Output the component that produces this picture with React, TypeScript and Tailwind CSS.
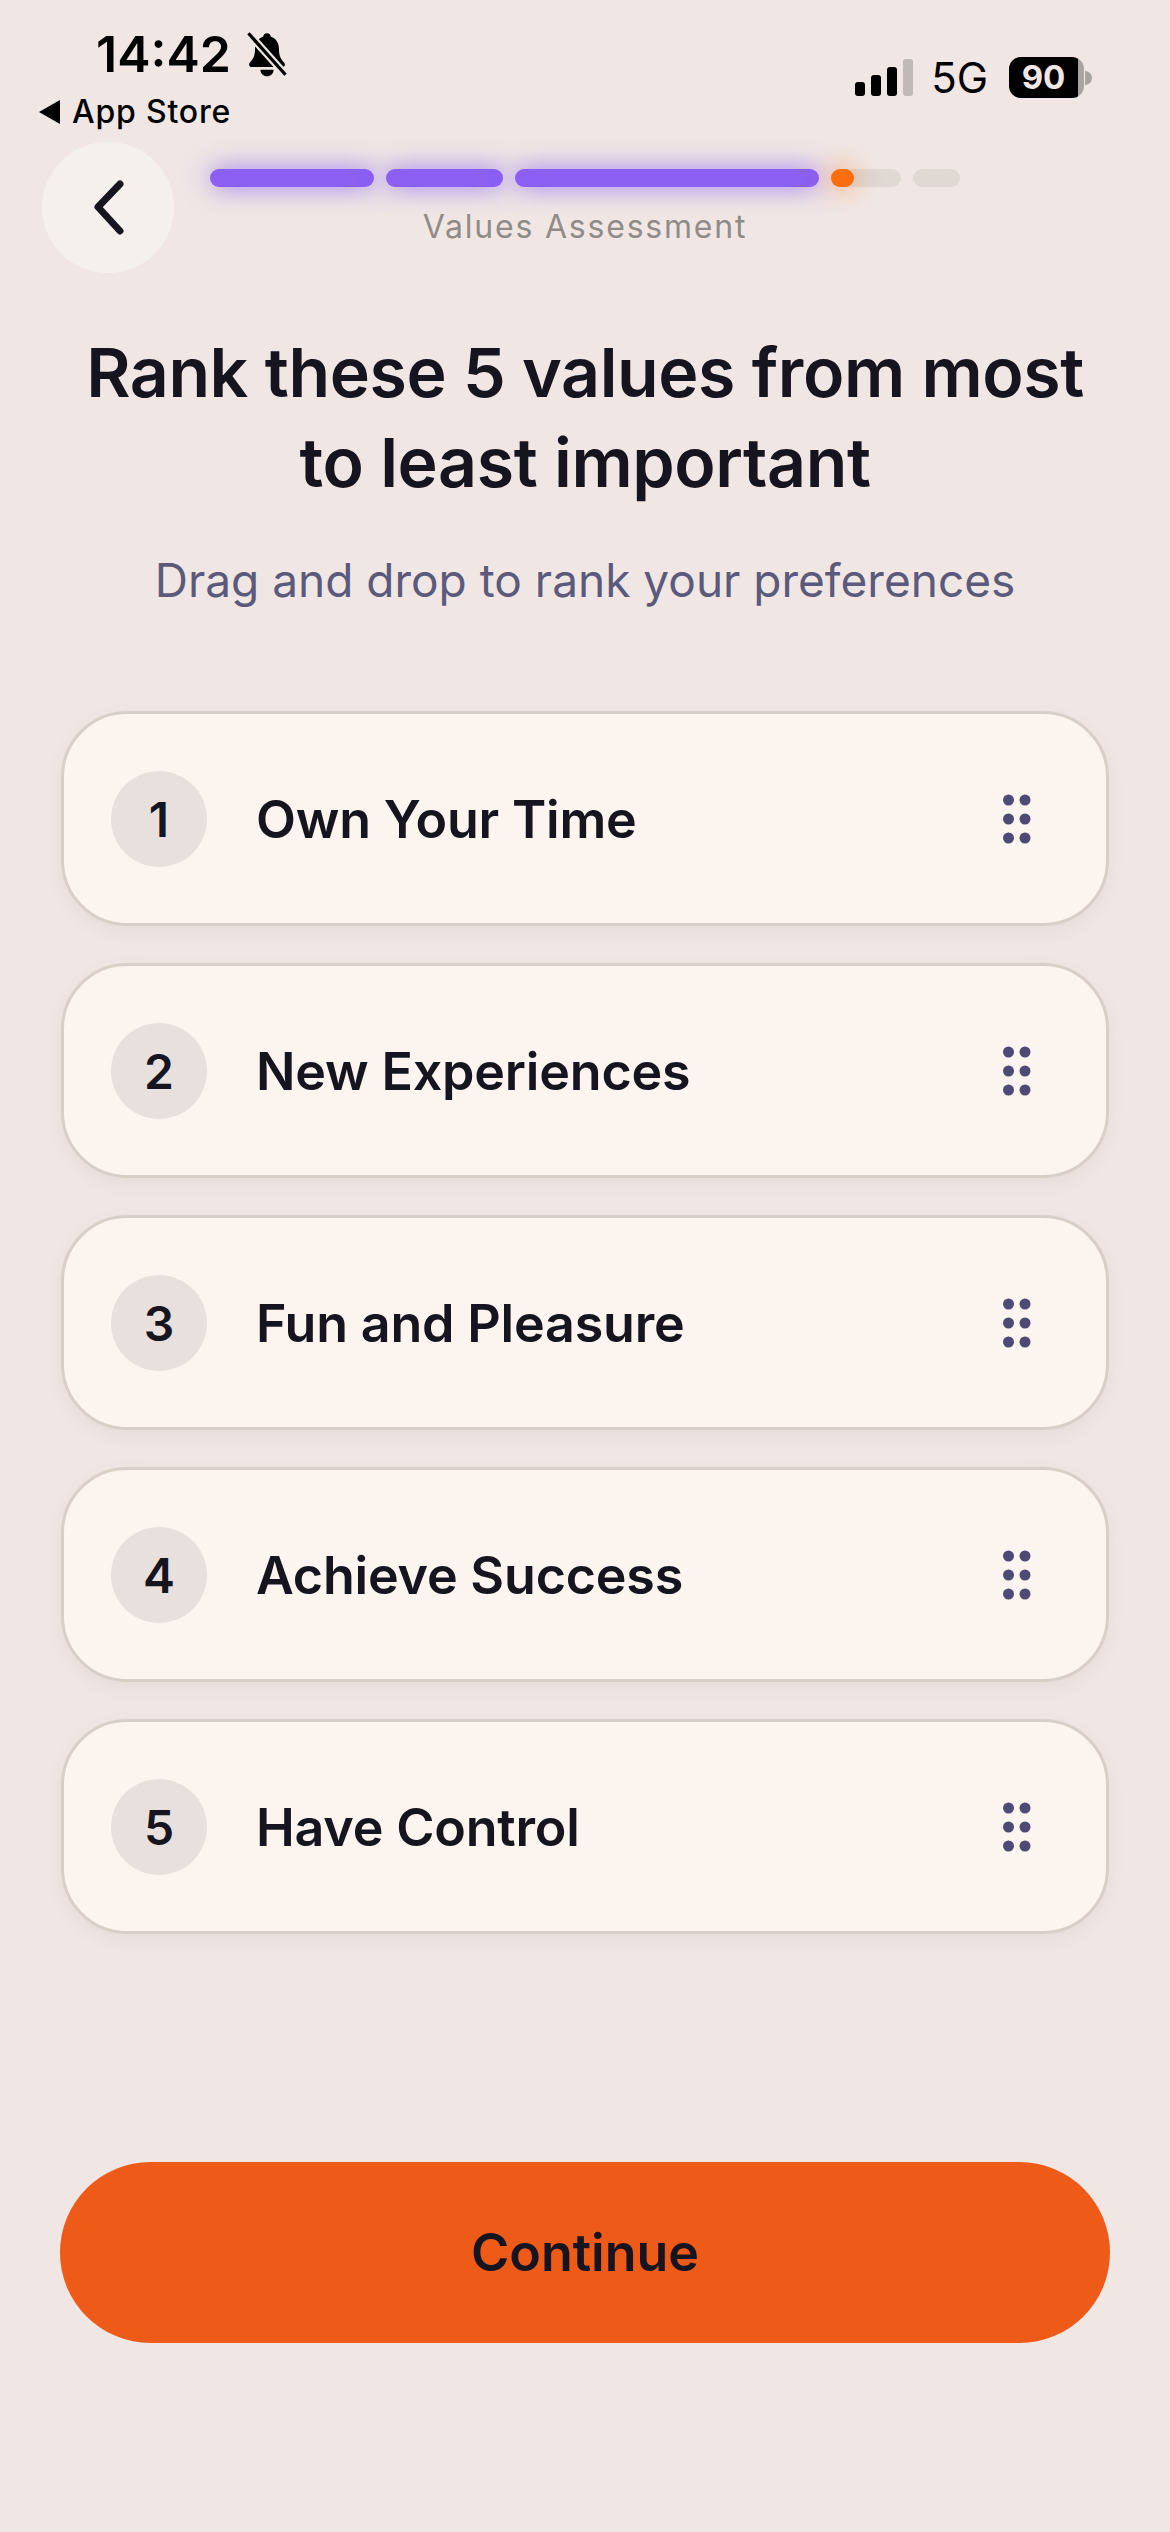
const values = ["Own Your Time", "New Experiences", "Fun and Pleasure", "Achieve Success", "Have Control"];

const DragHandle = () => (
    <svg width="28" height="50" viewBox="0 0 28 50" className="shrink-0" fill="#4d4b75">
        <circle cx="5.5" cy="6" r="5.5" />
        <circle cx="22" cy="6" r="5.5" />
        <circle cx="5.5" cy="25" r="5.5" />
        <circle cx="22" cy="25" r="5.5" />
        <circle cx="5.5" cy="44" r="5.5" />
        <circle cx="22" cy="44" r="5.5" />
    </svg>
);

const StatusBar = () => (
    <div className="flex h-[142px] justify-between">
        <div className="flex flex-col pl-[39px] pt-[26px]">
            <div className="flex items-center pl-[57px]">
                <span className="text-[50px] leading-[56px] font-semibold text-black">14:42</span>
                <svg width="40" height="48" viewBox="0 0 36 44" className="ml-[16px]">
                    <path d="M18 3c2 0 3.500 1.500 3.500 3.200 5 1.500 7.500 6 7.500 11.500 0 6 1.500 9 5 12.500 1 1.500 0 3.800-2 3.800H4c-2 0-3-2.300-2-3.800 3.500-3.500 5-6.500 5-12.500 0-5.500 2.500-10 7.500-11.500C14.500 4.500 16 3 18 3z" fill="#000" />
                    <path d="M12 36.500h12c0 3.500-2.700 6-6 6s-6-2.500-6-6z" fill="#000" />
                    <line x1="1" y1="3" x2="35" y2="41" stroke="#f0e7e4" strokeWidth="7" />
                    <line x1="1" y1="3" x2="35" y2="41" stroke="#000" strokeWidth="3" />
                </svg>
            </div>
            <div className="mt-[10px] flex items-center">
                <svg width="21" height="24" viewBox="0 0 21 24">
                    <path d="M21 0v24L0 12z" fill="#000" />
                </svg>
                <span className="ml-[12px] text-[32px] leading-[40px] font-medium tracking-[0.8px] text-black">App Store</span>
            </div>
        </div>
        <div className="flex items-start pr-[78px] pt-[57px]">
            <svg width="58" height="37" viewBox="0 0 58 37" className="mt-[2px]">
                <rect x="0" y="23" width="10" height="14" rx="3" fill="#000" />
                <rect x="16" y="16" width="10" height="21" rx="3" fill="#000" />
                <rect x="32" y="8" width="10" height="29" rx="3" fill="#000" />
                <rect x="48" y="0" width="10" height="37" rx="3" fill="#c0b9b5" />
            </svg>
            <span className="ml-[18px] mt-[-1px] text-[42px] leading-[44px] font-normal text-black">5G</span>
            <div className="ml-[21px] flex items-center">
                <div className="flex h-[41px] w-[75px] items-center justify-center rounded-[12px] bg-[linear-gradient(90deg,#000_92%,#a9a4a0_92%)] pr-[6px]">
                    <span className="text-[33px] leading-[41px] font-bold text-[#f0e7e4]">90</span>
                </div>
                <div className="ml-[1px] h-[14px] w-[7px] rounded-r-full bg-[#a9a4a0]" />
            </div>
        </div>
    </div>
);

const App = () => {
    return (
        <div className="flex min-h-[2532px] w-[1170px] flex-col bg-[#f0e7e4] font-['Inter',sans-serif] text-[#16141f]">
            <StatusBar />

            {/* Header */}
            <div className="flex items-start pl-[42px]">
                <button className="flex h-[131px] w-[132px] shrink-0 items-center justify-center rounded-full bg-[#f5f0ec]">
                    <svg width="34" height="56" viewBox="0 0 34 56" fill="none" stroke="#16141f" strokeWidth="7" strokeLinecap="round" strokeLinejoin="round">
                        <path d="M29 4 L7 27 L29 51" />
                    </svg>
                </button>
                <div className="ml-[36px] flex w-[750px] flex-col items-center pt-[27px]">
                    <div className="flex h-[18px] w-full gap-[12px]">
                        <div className="w-[164px] rounded-full bg-[#8a5ff2] shadow-[0_0_26px_rgba(138,95,242,0.85)]" />
                        <div className="w-[117px] rounded-full bg-[#8a5ff2] shadow-[0_0_26px_rgba(138,95,242,0.85)]" />
                        <div className="w-[304px] rounded-full bg-[#8a5ff2] shadow-[0_0_26px_rgba(138,95,242,0.85)]" />
                        <div className="w-[70px] rounded-full bg-[#dfd8d3]">
                            <div className="h-[18px] w-[23px] rounded-full bg-[#fb6d0d] shadow-[0_0_26px_rgba(251,109,13,0.7)]" />
                        </div>
                        <div className="w-[47px] rounded-full bg-[#dfd8d3]" />
                    </div>
                    <div className="mt-[20px] text-[32px] leading-[40px] tracking-[1.8px] text-[#918b88]">Values Assessment</div>
                </div>
            </div>

            {/* Title */}
            <div className="mt-[54px] px-[60px] text-center">
                <h1 className="text-[68px] leading-[90px] font-semibold tracking-[-0.4px]">
                    Rank these 5 values from most
                    <br />
                    to least important
                </h1>
                <p className="mt-[45px] text-[46px] leading-[56px] text-[#5b5a7c]">Drag and drop to rank your preferences</p>
            </div>

            {/* Ranked values */}
            <div className="mt-[103px] flex flex-col gap-[37px] px-[61px]">
                {values.map((value, i) => (
                    <div
                        key={value}
                        className="flex h-[215px] items-center rounded-[66px] border-[3px] border-[#d9cfc9] bg-[#fcf4ef] pl-[47px] pr-[75px] shadow-[0_6px_16px_rgba(120,100,90,0.08)]"
                    >
                        <div className="flex h-[96px] w-[96px] shrink-0 items-center justify-center rounded-full bg-[#e7e0dc] pt-[2px] text-[48px] font-semibold">
                            {i + 1}
                        </div>
                        <div className="ml-[49px] flex-1 pt-[2px] text-[52px] font-semibold tracking-[-0.2px]">{value}</div>
                        <DragHandle />
                    </div>
                ))}
            </div>

            {/* Continue */}
            <div className="mt-[228px] px-[60px]">
                <button className="h-[181px] w-full rounded-full bg-[#ee5b19] text-[52px] font-semibold text-[#16141f]">Continue</button>
            </div>
        </div>
    );
};

export default App;
